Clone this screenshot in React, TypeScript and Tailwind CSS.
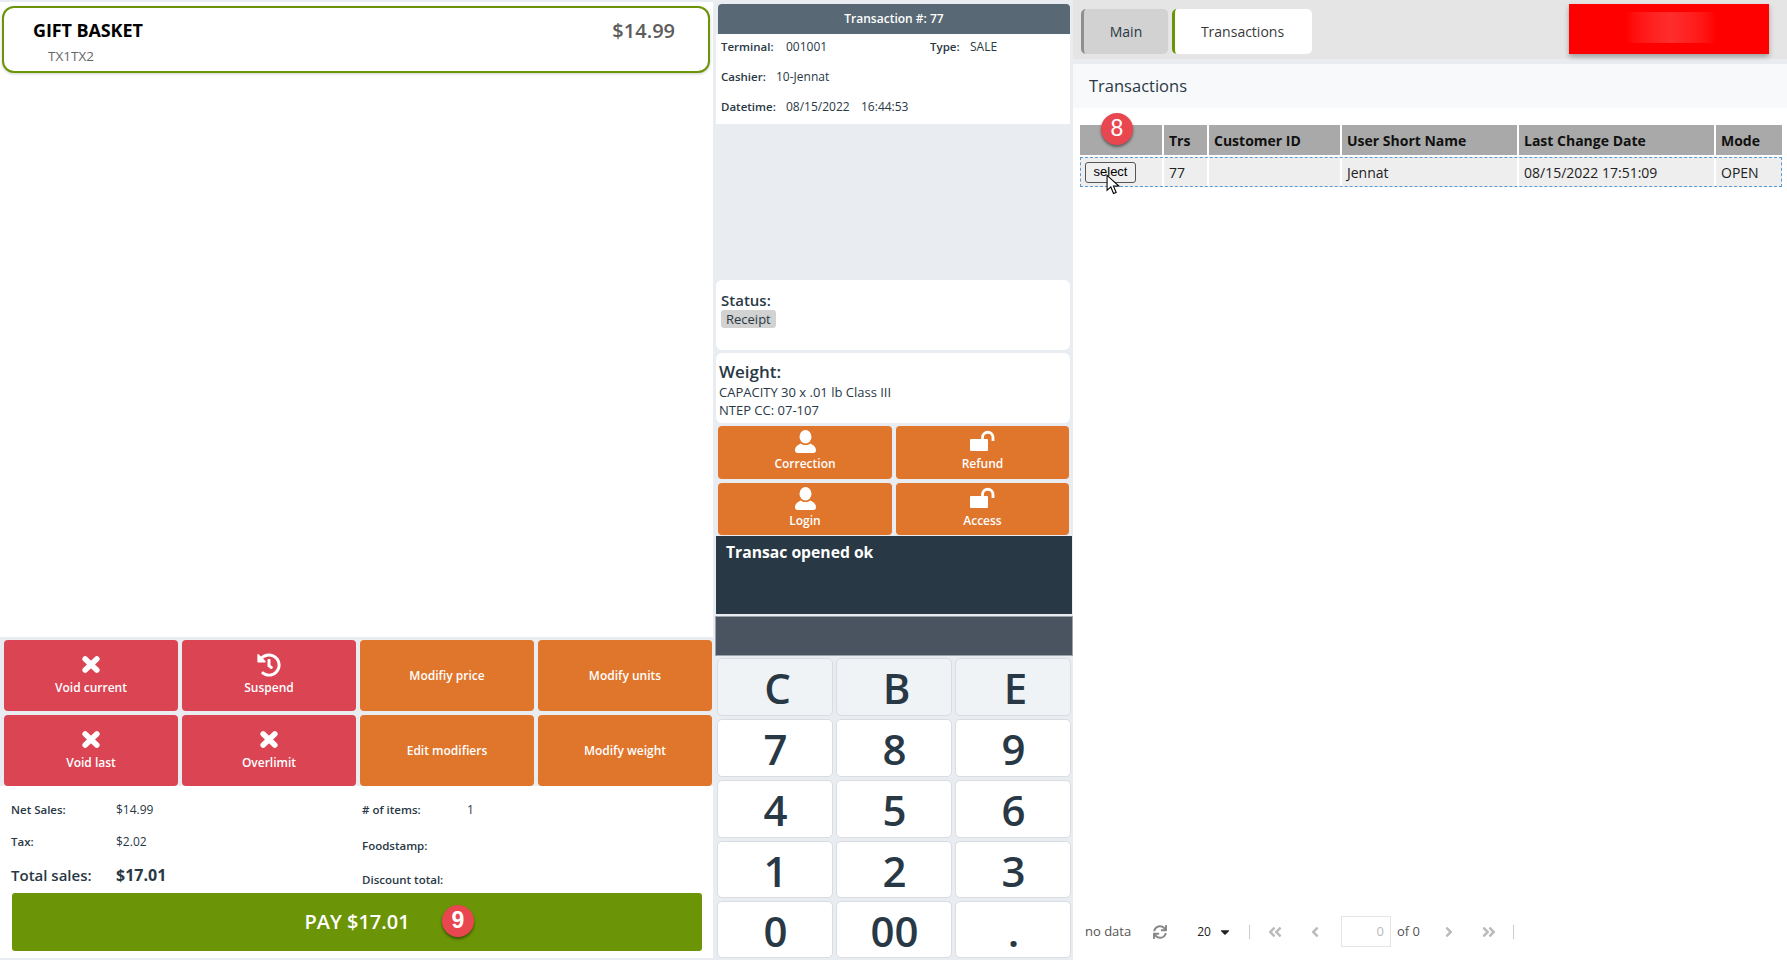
import React from "react";
import { FaHistory, FaSync, FaAngleDoubleLeft, FaAngleLeft, FaAngleRight, FaAngleDoubleRight, FaCaretDown } from "react-icons/fa";

function XIcon() {
  return (
    <svg width="18" height="17" viewBox="0 0 18 17" fill="none">
      <path d="M3.2 3L14.8 14M14.8 3L3.2 14" stroke="white" strokeWidth="5.6" strokeLinecap="round" />
    </svg>
  );
}

function UserIcon() {
  return (
    <svg width="21" height="23" viewBox="0 0 21 23" fill="white">
      <ellipse cx="10.5" cy="6.8" rx="6" ry="6.8" />
      <path d="M2.5 23C1 23 0 22 0 20.5C0 16.5 3 15.2 5.8 13.6C8 15.6 13 15.6 15.2 13.6C18 15.2 21 16.5 21 20.5C21 22 20 23 18.5 23Z" />
    </svg>
  );
}

function UnlockIcon() {
  return (
    <svg width="25" height="23" viewBox="0 0 25 23" fill="none">
      <rect x="0" y="9" width="18" height="12" rx="1" fill="white" />
      <path d="M12.5 10V7.5a5 5 0 0 1 10.5 0V11" stroke="white" strokeWidth="2.8" />
    </svg>
  );
}

function Badge({ n, className }: { n: string; className: string }) {
  return (
    <div className={"absolute flex h-[32px] w-[32px] items-center justify-center rounded-full bg-[#e8474f] pb-[2px] font-['Liberation_Sans',sans-serif] text-[23px] text-white shadow-[0_2px_3px_rgba(0,0,0,0.45)] " + className}>
      {n}
    </div>
  );
}

function ActionButton({ label, icon, color }: { label: string; icon?: React.ReactNode; color: string }) {
  if (!icon) {
    return (
      <div className={"flex items-center justify-center rounded-[4px] text-[12px] font-semibold text-white " + color}>
        {label}
      </div>
    );
  }
  return (
    <div className={"flex flex-col items-center rounded-[4px] pt-[13px] text-[12px] font-semibold text-white " + color}>
      <div className="flex h-[23px] items-center justify-center">{icon}</div>
      <span className="mt-[4px] leading-[16px]">{label}</span>
    </div>
  );
}

function LockButton({ label, icon }: { label: string; icon: React.ReactNode }) {
  return (
    <div className="flex flex-col items-center justify-start rounded-[4px] bg-[#e0752c] pt-[4px] text-[12px] font-semibold leading-[16px] text-white">
      {icon}
      <span className="mt-[3px]">{label}</span>
    </div>
  );
}

const keys = ["C", "B", "E", "7", "8", "9", "4", "5", "6", "1", "2", "3", "0", "00", "."];
const headers = ["", "Trs", "Customer ID", "User Short Name", "Last Change Date", "Mode"];
const cells = ["77", "", "Jennat", "08/15/2022 17:51:09", "OPEN"];

export default function App() {
  return (
    <div className="flex h-[960px] w-[1787px] overflow-hidden bg-[#e9edf2] font-['Open_Sans',sans-serif] text-[#293845]">
      {/* Left column */}
      <div className="flex w-[713px] flex-col">
        <div className="mt-[2px] h-[635px] bg-white pl-[2px] pr-[3px] pt-[4px]">
          <div className="flex h-[67px] justify-between rounded-[12px] border-2 border-[#6b9507] bg-white pl-[29px] pr-[33px] shadow-[0_1px_3px_rgba(0,0,0,0.2)]">
            <div>
              <div className="mt-[10px] text-[18px] font-bold leading-[24px] tracking-[-0.1px] text-black">GIFT BASKET</div>
              <div className="ml-[15px] mt-[5px] text-[13.5px] leading-[18px] text-[#666]">TX1TX2</div>
            </div>
            <div className="mt-[10px] text-[20px] font-semibold leading-[26px] text-[#5c5c5c]">$14.99</div>
          </div>
        </div>
        <div className="mt-[3px] grid grid-cols-4 grid-rows-[71px_71px] gap-x-[4px] gap-y-[4px] pl-[4px] pr-[1px]">
          <ActionButton label="Void current" color="bg-[#da4453]" icon={<XIcon />} />
          <ActionButton label="Suspend" color="bg-[#da4453]" icon={<FaHistory size={24} />} />
          <ActionButton label="Modifiy price" color="bg-[#e0752c]" />
          <ActionButton label="Modify units" color="bg-[#e0752c]" />
          <ActionButton label="Void last" color="bg-[#da4453]" icon={<XIcon />} />
          <ActionButton label="Overlimit" color="bg-[#da4453]" icon={<XIcon />} />
          <ActionButton label="Edit modifiers" color="bg-[#e0752c]" />
          <ActionButton label="Modify weight" color="bg-[#e0752c]" />
        </div>
        <div className="h-[172px] bg-white">
          <div className="flex h-[107px] pt-[8px]">
            <div className="w-[362px] pl-[11px]">
              <div className="flex h-[32px] items-center">
                <span className="w-[105px] text-[11.5px] font-semibold">Net Sales:</span>
                <span className="text-[12px]">$14.99</span>
              </div>
              <div className="flex h-[32px] items-center">
                <span className="w-[105px] text-[11.5px] font-semibold">Tax:</span>
                <span className="text-[12px]">$2.02</span>
              </div>
              <div className="flex h-[34px] items-center">
                <span className="w-[105px] text-[15px] font-semibold">Total sales:</span>
                <span className="text-[16px] font-bold">$17.01</span>
              </div>
            </div>
            <div className="text-[11.5px]">
              <div className="flex h-[32px] items-center">
                <span className="w-[105px] font-semibold">
                  # of items:
                </span>
                <span className="text-[12px]">1</span>
              </div>
              <div className="mt-[4px] flex h-[32px] items-center font-semibold">Foodstamp:</div>
              <div className="mt-[2px] flex h-[32px] items-center font-semibold">Discount total:</div>
            </div>
          </div>
          <div className="relative ml-[12px] flex h-[58px] w-[690px] items-center justify-center rounded-[3px] bg-[#6b9507] text-[20px] font-semibold text-white">
            PAY $17.01
            <Badge n="9" className="left-[430px] top-[12px]" />
          </div>
        </div>
      </div>

      {/* Middle column */}
      <div className="flex w-[360px] flex-col">
        <div className="ml-[5px] mt-[4px] flex h-[30px] w-[352px] items-center justify-center rounded-t-[4px] bg-[#586874] text-[12px] font-semibold text-white">
          Transaction #: 77
        </div>
        <div className="ml-[3px] h-[90px] w-[354px] bg-white pl-[5px] text-[11.5px]">
          <div className="flex h-[26px] items-center">
            <span className="w-[65px] font-semibold">Terminal:</span>
            <span className="w-[144px] text-[12px]">001001</span>
            <span className="w-[40px] font-semibold">Type:</span>
            <span className="text-[12px]">SALE</span>
          </div>
          <div className="mt-[2px] flex h-[30px] items-center">
            <span className="w-[55px] font-semibold">Cashier:</span>
            <span className="text-[12px]">10-Jennat</span>
          </div>
          <div className="flex h-[30px] items-center">
            <span className="w-[65px] font-semibold">Datetime:</span>
            <span className="w-[75px] text-[12px]">08/15/2022</span>
            <span className="text-[12px]">16:44:53</span>
          </div>
        </div>
        <div className="ml-[3px] mt-[156px] h-[70px] w-[354px] rounded-[6px] bg-white pl-[5px] pt-[11px]">
          <div className="text-[15px] font-semibold leading-[19px]">Status:</div>
          <div className="inline-block rounded-[3px] bg-[#d2d2d2] px-[5px] align-top text-[13px] leading-[18px]">Receipt</div>
        </div>
        <div className="ml-[3px] mt-[3px] h-[70px] w-[354px] rounded-[6px] bg-white pl-[3px] pt-[9px] text-[13px]">
          <div className="text-[17px] font-semibold leading-[20px]">Weight:</div>
          <div className="mt-[1px] leading-[18px]">CAPACITY 30 x .01 lb Class III</div>
          <div className="leading-[18px]">NTEP CC: 07-107</div>
        </div>
        <div className="ml-[5px] mt-[3px] grid w-[351px] grid-cols-[174px_173px] grid-rows-[53px_52px] gap-[4px]">
          <LockButton label="Correction" icon={<UserIcon />} />
          <LockButton label="Refund" icon={<UnlockIcon />} />
          <LockButton label="Login" icon={<UserIcon />} />
          <LockButton label="Access" icon={<UnlockIcon />} />
        </div>
        <div className="ml-[3px] mt-[1px] h-[78px] w-[356px] bg-[#293845] pl-[10px] pt-[5px] text-[15.7px] font-bold leading-[22px] text-white">
          Transac opened ok
        </div>
        <div className="ml-[2px] mt-[2px] h-[40px] w-[358px] border border-[#9aa2a8] bg-[#495460]" />
        <div className="ml-[4px] mt-[2px] grid w-[354px] grid-cols-3 grid-rows-[58px_58px_58px_57px_57px] gap-x-[3px] gap-y-[3px]">
          {keys.map((k, i) => (
            <div
              key={k}
              className={"flex items-center justify-center rounded-[5px] border border-[#d9dde1] pt-[2px] text-[42px] font-semibold leading-none " + (i < 3 ? "bg-[#f0f3f6] pl-[5px]" : "bg-white pl-[1px]")}
            >
              {k}
            </div>
          ))}
        </div>
      </div>

      {/* Right column */}
      <div className="flex min-w-0 flex-1 flex-col">
        <div className="flex h-[59px] shrink-0 items-start justify-between bg-[#e5e5e5] pl-[8px] pr-[18px] pt-[4px]">
          <div className="mt-[5px] flex gap-[4px] text-[14px]">
            <div className="flex h-[45px] w-[87px] items-center justify-center rounded-[5px] border-l-[3px] border-[#8f8f8f] bg-[#d2d2d2]">Main</div>
            <div className="flex h-[45px] w-[140px] items-center justify-center rounded-[5px] border-l-[3px] border-[#6b9507] bg-white pr-[2px] text-[#3a3a3a]">Transactions</div>
          </div>
          <div className="flex h-[50px] w-[200px] items-start justify-center bg-[#ff0000] pl-[4px] pt-[8px] shadow-[0_3px_5px_rgba(0,0,0,0.3)]">
            <div className="h-[31px] w-[90px] bg-gradient-to-r from-[#ff0000] via-[#ff2d2d] to-[#ff0000]" />
          </div>
        </div>
        <div className="mt-[5px] flex h-[44px] shrink-0 items-center bg-[#f8f9fb] pl-[16px] text-[16.5px]">Transactions</div>
        <div className="relative flex flex-1 flex-col bg-white">
          <div className="ml-[5px] mt-[15px]">
            <table className="w-[706px] table-fixed border-separate [border-spacing:2px] text-[14px]">
              <colgroup>
                <col className="w-[82px]" />
                <col className="w-[43px]" />
                <col className="w-[131px]" />
                <col className="w-[175px]" />
                <col className="w-[195px]" />
                <col className="w-[66px]" />
              </colgroup>
              <thead>
                <tr className="h-[30px] bg-[#a9a9a9]">
                  {headers.map((h) => (
                    <th key={h} className="pl-[5px] text-left font-bold text-[#111]">{h}</th>
                  ))}
                </tr>
              </thead>
              <tbody>
                <tr className="h-[30px] bg-[#eeeeee] outline-1 -outline-offset-1 outline-dashed outline-[#5b9bd5]">
                  <td className="pl-[5px]">
                    <div className="flex h-[21px] w-[51px] items-center justify-center rounded-[3px] border border-[#555] bg-[#efefef] font-['Liberation_Sans',sans-serif] text-[13px] text-black">select</div>
                  </td>
                  {cells.map((c, i) => (
                    <td key={i} className="pl-[5px] text-[#222]">{c}</td>
                  ))}
                </tr>
              </tbody>
            </table>
          </div>
          <Badge n="8" className="left-[28px] top-[5px]" />
          <svg className="absolute left-[33px] top-[66px]" width="15" height="22" viewBox="0 0 14 20">
            <path d="M1 1V15L4.5 11.8L7 18L9.5 17L7 11H12Z" fill="white" stroke="black" strokeWidth="1" />
          </svg>
          <div className="mb-[13px] mt-auto flex h-[31px] items-center pl-[12px] text-[13px] text-[#555]">
            <span>no data</span>
            <FaSync className="ml-[22px] text-[#888]" size={14} />
            <span className="ml-[30px] text-[12px] text-[#222]">20</span>
            <FaCaretDown className="ml-[7px] text-[#222]" size={14} />
            <div className="ml-[17px] h-[14px] w-px bg-[#ccc]" />
            <FaAngleDoubleLeft className="ml-[17px] text-[#bbb]" size={16} />
            <FaAngleLeft className="ml-[24px] text-[#bbb]" size={16} />
            <div className="ml-[18px] flex h-[31px] w-[50px] items-center justify-end border border-[#e5e5e5] pr-[6px] text-[#bbb]">0</div>
            <span className="ml-[6px]">of 0</span>
            <FaAngleRight className="ml-[21px] text-[#bbb]" size={16} />
            <FaAngleDoubleRight className="ml-[24px] text-[#bbb]" size={16} />
            <div className="ml-[16px] h-[14px] w-px bg-[#ccc]" />
          </div>
        </div>
      </div>
    </div>
  );
}
